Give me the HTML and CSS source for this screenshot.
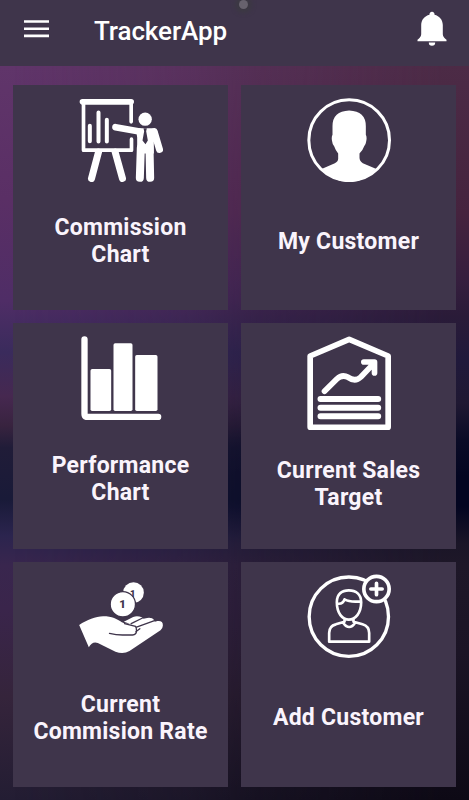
FILE: index.html
```html
<!DOCTYPE html>
<html lang="en">

<head>
    <meta charset="UTF-8">
    <meta name="viewport" content="width=device-width, initial-scale=1.0">
    <title>TrackerApp</title>
    <link rel="stylesheet" href="styles.css">
</head>

<body>

    <header class="header">
        <svg class="menu" viewBox="0 0 25 18">
            <path d="M0 1.500h25M0 8.700h25M0 15.900h25" />
        </svg>
        <h1>TrackerApp</h1>
        <svg class="bell" viewBox="0 0 30 36">
            <path d="M15 .8a2.500 2.500 0 0 0-2.500 3C7.500 5 4.200 9 4.200 14v9.200C4.200 25.500 2 27.500.5 28.700v1.600h29v-1.600c-1.500-1.200-3.700-3.200-3.700-5.500V14c0-5-3.300-9-8.300-10.200A2.500 2.500 0 0 0 15 .8zM11.800 31.500h6.400a3.200 3.200 0 0 1-6.400 0z" />
        </svg>
        <span class="camera"></span>
    </header>

    <main class="grid">
        <a class="card">
            <svg class="icon" viewBox="40.500 37.500 252 252">
                <g class="line">
                    <path stroke-width="17" d="M51 49h146" />
                    <path stroke-width="11" d="M54 55v139h144v-33M197 55v54" />
                    <path stroke-width="12" d="M73 121v46M99 81v87M124 103v65" />
                    <path stroke-width="21" d="M99 200l-21 79M149 200l22 79" />
                    <path stroke-width="20" d="M150 125l72 13" />
                    <path stroke-width="21" d="M266 138l16 54" />
                    <path stroke-width="24" d="M226 187l-3 90M252 187l2 90" />
                </g>
                <circle cx="239" cy="101" r="20" />
                <path d="M211 128h51q12 0 14 12l2 43-13-14v35h-50v-48z" />
                <path class="dark" d="M234 128h10l-2 9 5 28-7 11-9-11 5-28z" />
            </svg>
            <p>Commission<br>Chart</p>
        </a>
        <a class="card">
            <svg class="icon" viewBox="34.500 37.500 252 252">
                <circle class="line" stroke-width="9" cx="161" cy="164" r="121" />
                <path d="M80 250l38-17q11-6 10-16v-13q-7-8-12-22-6-8-6-14-3-13 1-20v-26q0-45 50-47 50 2 50 47v26q4 7 1 20-1 9-6 14-5 14-14 22v13q0 10 10 16l39 17q-34 40-80 40t-81-40z" />
            </svg>
            <p>My Customer</p>
        </a>
        <a class="card">
            <svg class="icon" viewBox="40.500 32 252 252">
                <path class="line" stroke-width="19" d="M57 42v224q0 9 9 9h212" />
                <rect x="75" y="131" width="62" height="126" rx="5" />
                <rect x="144" y="54" width="57" height="203" rx="5" />
                <rect x="209" y="89" width="67" height="168" rx="5" />
            </svg>
            <p>Performance<br>Chart</p>
        </a>
        <a class="card">
            <svg class="icon tall" viewBox="34.500 32 252 282">
                <g class="line">
                    <path stroke-width="17" d="M44 92L161 42l117 50v214H44z" />
                    <path stroke-width="18" d="M75 221h173M75 247h173M75 273h173" />
                    <path stroke-width="17" d="M87 198l37-37q16-15 34-5 21 15 38-1l39-41M205 110h32v33" />
                </g>
            </svg>
            <p>Current Sales<br>Target</p>
        </a>
        <a class="card">
            <svg class="icon" viewBox="40.500 12 252 252">
                <circle cx="204" cy="68" r="31" />
                <text class="coin back" x="202" y="80">1</text>
                <circle class="edge" cx="172" cy="103" r="38" />
                <text class="coin" x="171" y="115">1</text>
                <path d="M41 165C65 150 90 139 113 139C140 139 155 147 169 157Q182 163 193 161L175 155L203 141Q215 136 229 142L234 146L245 144Q260 142 266 150L268 155L276 153Q293 151 292 167Q292 174 285 181L192 243Q173 254 150 245L97 219Q80 213 70 232Z" />
                <path class="crease" d="M132 190q20 5 39 5h30q12-1 12-13 0-9-3-13l-33-8M197 161l34-17M211 172l56-20M211 185l12-9" />
            </svg>
            <p>Current<br>Commision Rate</p>
        </a>
        <a class="card">
            <svg class="icon" viewBox="34.500 27 252 252">
                <g class="line">
                    <circle stroke-width="10" cx="160" cy="155" r="119" />
                    <path stroke-width="8" d="M124 112c0-26 16-36 36-36s37 11 37 36c0 33-18 52-37 52s-36-19-36-52zM127 116q15 2 20-13 16 9 47 6M147 162v8l-26 8q-20 5-20 26v26h120v-26q0-20-20-26l-27-8v-8M143 173q18 26 36 0" />
                </g>
                <circle class="badge" cx="243" cy="72" r="38" />
                <path class="line" stroke-width="11" d="M226 72h34M243 55v34" />
            </svg>
            <p>Add Customer</p>
        </a>
    </main>

</body>

</html>
```

FILE: styles.css
```css
* {
    box-sizing: border-box;
}

body {
    font-family: Roboto, sans-serif;
    margin: 0;
    height: 800px;
    display: flex;
    flex-direction: column;
    overflow: hidden;
    color: #fff;
    background-color: #1d1730;
}

.header {
    position: relative;
    flex: none;
    height: 66px;
    padding: 0 22px 8px 24px;
    display: flex;
    align-items: center;
    background-color: #3f354b;
}

.header h1 {
    flex: 1;
    margin: 3px 0 0 45px;
    font-size: 26px;
    line-height: 32px;
    font-weight: 500;
    letter-spacing: -0.1px;
}

.menu {
    width: 25px;
    height: 18px;
    stroke: #fff;
    stroke-width: 2.6;
}

.bell {
    width: 30px;
    height: 36px;
    fill: #fff;
}

/* front camera dot */
.camera {
    position: absolute;
    top: 0;
    left: 239px;
    width: 9px;
    height: 9px;
    border-radius: 50%;
    background-color: #67626d;
    box-shadow: 0 0 4px 4px #3c3943;
}

.grid {
    position: relative;
    flex: 1;
    display: grid;
    grid-template-columns: 1fr 1fr;
    grid-template-rows: repeat(3, 1fr);
    gap: 13px;
    padding: 19px 13px 13px;
    background: linear-gradient(#60356a 0, #5a2f65 18%, #4f2d66 32%, #3a2b5c 39%, #462850 45%, #38233f 49%, #201c38 52%, #191a38 59%, #2b244e 64%, #39264e 68%, #3a254b 74%, #35243b 86%, #231d33 100%);
}

/* darker right side of the backdrop, faded in from the left */
.grid::before {
    content: "";
    position: absolute;
    inset: 0;
    background: linear-gradient(#4c2b46 0, #45233e 20%, #361e3e 29%, #2a1b38 34%, #20193b 40%, #1f1832 46%, #0a0b26 51%, #030520 56%, #030520 60%, #1a1527 65%, #1e1728 68%, #1b1425 80%, #0d0915 100%);
    mask-image: linear-gradient(90deg, transparent 3%, rgba(0, 0, 0, 0.35) 40%, rgba(0, 0, 0, 0.6) 55%, #000 95%);
}

.card {
    position: relative;
    display: flex;
    flex-direction: column;
    align-items: center;
    padding: 12.5px 8px 9.5px;
    background-color: #3f354b;
}

.card p {
    flex: 1;
    display: flex;
    align-items: center;
    margin: 0;
    text-align: center;
    font-size: 23px;
    line-height: 27px;
    font-weight: 700;
    letter-spacing: 0.25px;
    color: #faf4fc;
}

.icon {
    flex: none;
    width: 84px;
    height: 84px;
    fill: #fff;
}

.icon.tall {
    height: 94px;
}

.line {
    fill: none;
    stroke: #fff;
    stroke-linecap: round;
    stroke-linejoin: round;
}

.dark {
    fill: #3f354b;
}

.edge {
    stroke: #3f354b;
    stroke-width: 4;
}

.crease {
    fill: none;
    stroke: #3f354b;
    stroke-width: 4;
    stroke-linecap: round;
}

.badge {
    fill: #3f354b;
    stroke: #fff;
    stroke-width: 11;
}

.coin {
    fill: #3f354b;
    font-size: 34px;
    font-weight: 900;
    text-anchor: middle;
}

.coin.back {
    font-size: 28px;
}
```
